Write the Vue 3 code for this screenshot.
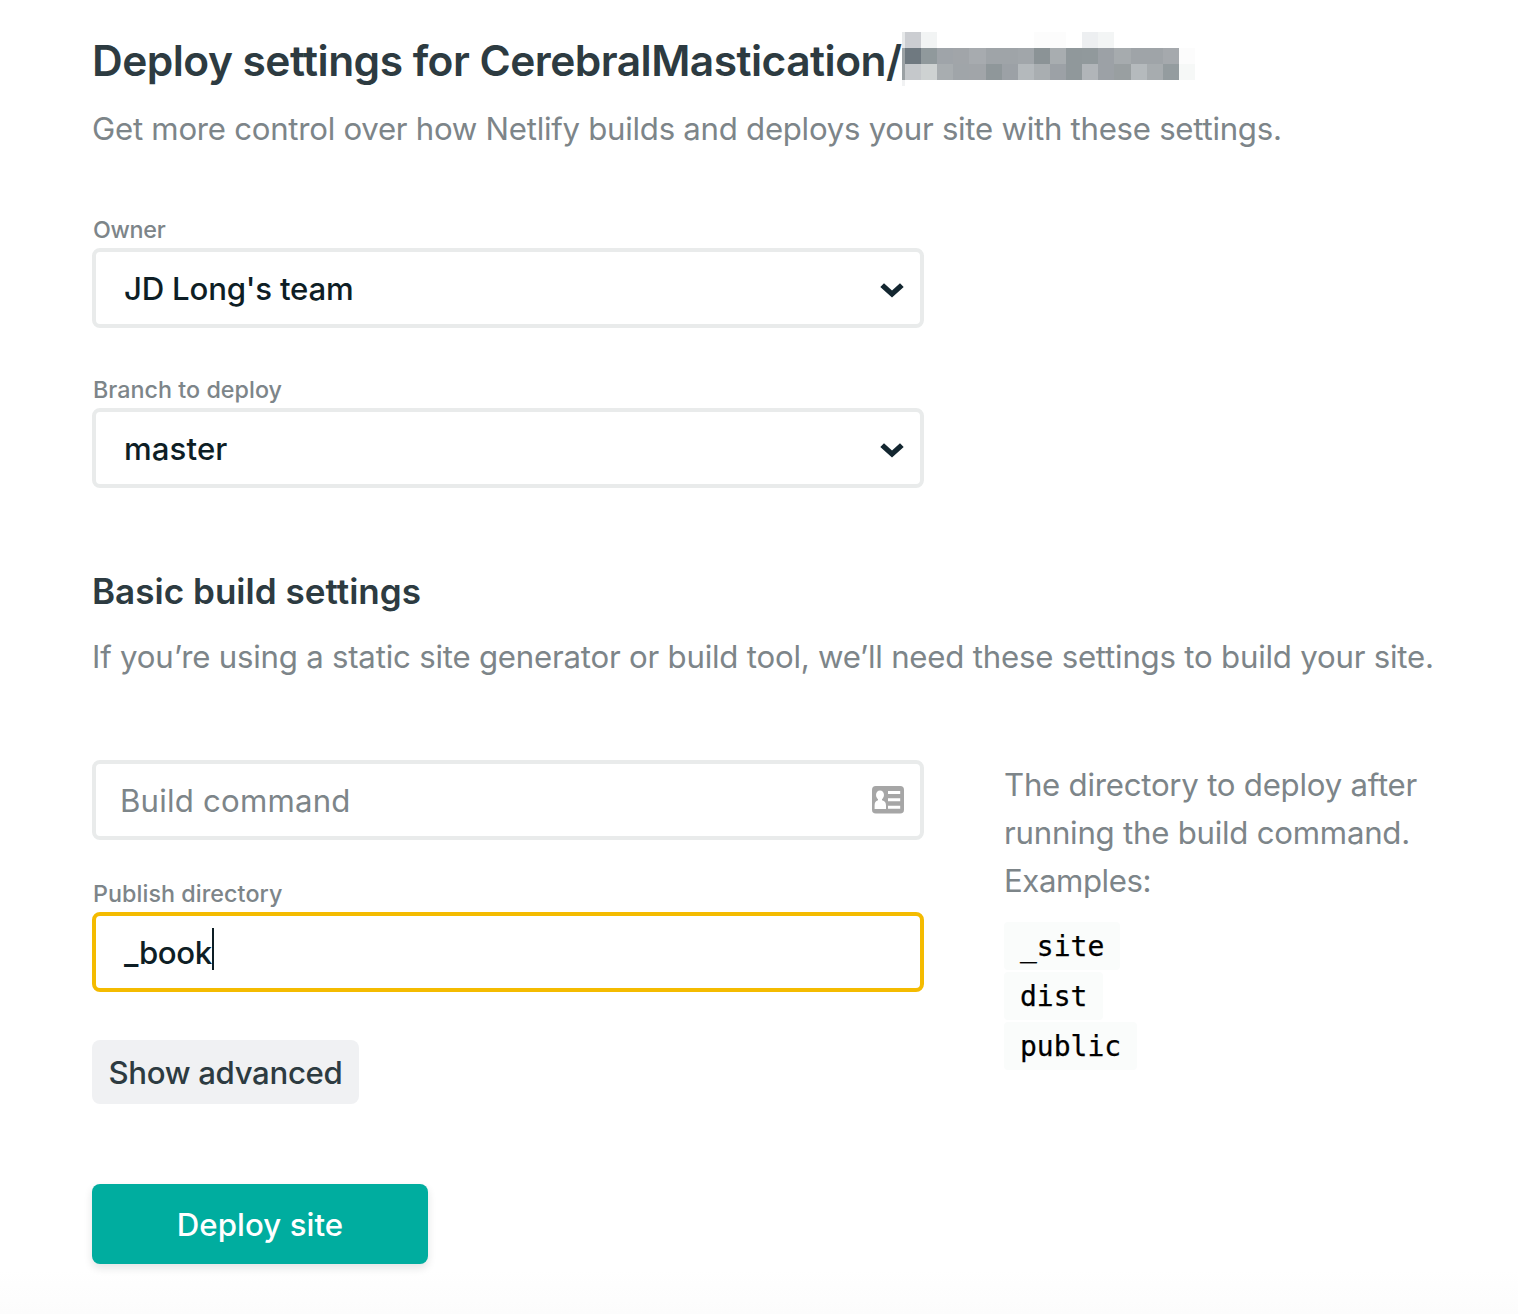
<script setup>
import { ref } from 'vue'

const selects = [
  { id: 'owner', label: 'Owner', value: "JD Long's team", spacing: 'ls-owner' },
  { id: 'branch', label: 'Branch to deploy', value: 'master', spacing: 'ls-branch' },
]
const publishDir = ref('_book')
const examples = ['_site', 'dist', 'public']

// Redacted repository name, as rows of mosaic tiles
const mosaic = [
  ['#cbcdd1', '#f2f4f4', '', '', '', '', '', '', '#fcfcfc', '#fcfcfc', '', '#edeff1', '#f3f5f5', '', '', '', '', ''],
  ['#6f7980', '#90999c', '#9fa4a9', '#a1a5a9', '#a7abaf', '#9fa4a8', '#9fa4a8', '#a1a6aa', '#8b9396', '#a8adb0', '#90989b', '#91999c', '#9ca1a6', '#a6abae', '#9fa4a8', '#9fa4a8', '#a5a9ad', '#fcfcfc'],
  ['#c5c8cb', '#ced2d2', '#a8adb0', '#a0a5a9', '#a1a5a9', '#8f979a', '#9ca1a6', '#b4b9bc', '#a9aeb1', '#9ca1a6', '#90989b', '#b1b5b9', '#9ca1a6', '#999fa1', '#b5babd', '#a7acaf', '#949c9f', '#f6f8f7'],
]
</script>

<template>
  <main class="page">
    <header class="head">
      <h1>Deploy settings for CerebralMastication/</h1>
      <div class="mosaic" aria-hidden="true">
        <i class="edge"></i>
        <div class="tiles">
          <div v-for="(row, r) in mosaic" :key="r" class="tile-row">
            <i v-for="(c, i) in row" :key="i" :style="{ background: c || 'transparent' }"></i>
          </div>
        </div>
      </div>
    </header>
    <p class="sub lead">Get more control over how Netlify builds and deploys your site with these settings.</p>

    <div v-for="s in selects" :key="s.id" class="field">
      <label :class="s.spacing">{{ s.label }}</label>
      <div class="box select">
        <span :class="s.spacing">{{ s.value }}</span>
        <svg width="24" height="15" viewBox="0 0 24 15">
          <path d="M0.3 3.9 4 0.2 12 7.4 20 0.2 23.7 3.9 12 14.6Z" fill="#132630" />
        </svg>
      </div>
    </div>

    <h2>Basic build settings</h2>
    <p class="sub note">If you’re using a static site generator or build tool, we’ll need these settings to build your site.</p>

    <div class="build">
      <form class="left" @submit.prevent>
        <div class="box command">
          <span>Build command</span>
          <svg width="32" height="28" viewBox="0 0 32 28">
            <rect width="32" height="27.5" rx="3.8" fill="#a6a6a6" />
            <ellipse cx="8" cy="9" rx="4" ry="4.5" fill="#fff" />
            <path d="M6 12h4v2.2c2.800.8 4 2.400 4 5.200v3.600H2.600v-3.600c0-2.800 1-4.400 3.400-5.200Z" fill="#fff" />
            <path d="M16 6.500h12.200M16 13.800h12.200M16 21.200h12.200" stroke="#fff" stroke-width="3" />
          </svg>
        </div>
        <label class="publish-label">Publish directory</label>
        <div class="box focused"><span>{{ publishDir }}</span><i class="caret"></i></div>
        <button type="button" class="advanced">Show advanced</button>
        <button type="submit" class="deploy">Deploy site</button>
      </form>
      <aside class="help">
        <p>The directory to deploy after<br />running the build command.<br /><span class="ex">Examples:</span></p>
        <code v-for="e in examples" :key="e">{{ e }}</code>
      </aside>
    </div>
  </main>
</template>

<style>
body { margin: 0; background: #fff; }
</style>

<style scoped>
.page {
  box-sizing: border-box;
  width: 1518px;
  height: 1314px;
  padding: 32px 0 0 92px;
  overflow: hidden;
  font-family: Inter, "Liberation Sans", sans-serif;
  font-size: 31.2px;
  color: #0e1e25;
  white-space: nowrap;
  background: linear-gradient(#fff 1270px, #fcfcfc 1314px);
}
h1, h2, p { margin: 0; }
.head { display: flex; height: 58px; }
h1 {
  width: 810px;
  font-size: 42.5px;
  font-weight: 600;
  line-height: 58px;
  letter-spacing: -0.535px;
  color: #2d3b41;
}
.mosaic { display: flex; }
.edge {
  width: 3px;
  height: 54px;
  background: linear-gradient(#e6e8e9 16px, #9ba1a4 16px 48px, #f1f2f3 48px);
}
.tile-row { display: flex; height: 16px; }
.tile-row i { width: 16.12px; }
.sub { line-height: 48px; color: #7d8589; }
.lead { margin-top: 15px; letter-spacing: -0.27px; }
.note { margin-top: 18px; letter-spacing: -0.218px; }
.field { height: 112px; margin-bottom: 48px; }
.lead + .field { margin-top: 63px; }
label {
  display: block;
  height: 32px;
  padding-left: 1px;
  font-size: 23.3px;
  font-weight: 500;
  line-height: 27px;
  color: #7d8589;
}
label.ls-owner { letter-spacing: -0.3px; }
label.ls-branch { letter-spacing: 0.03px; }
.box {
  box-sizing: border-box;
  display: flex;
  align-items: center;
  width: 832px;
  height: 80px;
  padding: 1px 16px 0 28px;
  border: 4px solid #e9ebeb;
  border-radius: 8px;
  font-weight: 500;
  background: #fff;
}
.select { justify-content: space-between; }
.select span.ls-owner { letter-spacing: -0.212px; }
.select span.ls-branch { letter-spacing: 0.1px; }
.select svg { margin-top: 3px; }
h2 {
  margin-top: 79px;
  font-size: 35.1px;
  font-weight: 600;
  line-height: 48px;
  color: #2d3b41;
}
.build { display: flex; gap: 80px; margin-top: 79px; }
.left { display: flex; flex-direction: column; align-items: flex-start; }
.command {
  justify-content: space-between;
  padding-left: 24px;
  font-weight: 400;
  letter-spacing: 0.2px;
  color: #7d8589;
}
.command svg { margin-top: -2px; }
.publish-label { margin-top: 40px; letter-spacing: 0.06px; }
.focused { border-color: #f4bb00; letter-spacing: -0.45px; }
.caret { width: 2px; height: 42px; margin: -7px 0 0 0; background: #0e1e25; }
button {
  padding: 1px 0 0;
  border: 0;
  border-radius: 8px;
  font: 500 31.2px Inter, "Liberation Sans", sans-serif;
}
.advanced {
  width: 267px;
  height: 64px;
  margin-top: 48px;
  letter-spacing: -0.343px;
  color: #2d3b41;
  background: #f0f1f3;
}
.deploy {
  width: 336px;
  height: 80px;
  margin-top: 80px;
  letter-spacing: 0.058px;
  color: #fff;
  background: #00ad9f;
  box-shadow: 0 4px 8px rgba(14, 30, 37, 0.12);
}
.help {
  display: flex;
  flex-direction: column;
  align-items: flex-start;
  line-height: 48px;
  letter-spacing: -0.24px;
  color: #7d8589;
}
.help p { margin: 1px 0 17px; }
.ex { letter-spacing: -0.425px; }
code {
  height: 48px;
  margin-bottom: 2px;
  padding: 0 16px;
  border-radius: 4px;
  font: 28px/50px "DejaVu Sans Mono", monospace;
  letter-spacing: 0;
  color: #000;
  background: #fafcfb;
  -webkit-text-stroke: 0.25px #000;
}
</style>
